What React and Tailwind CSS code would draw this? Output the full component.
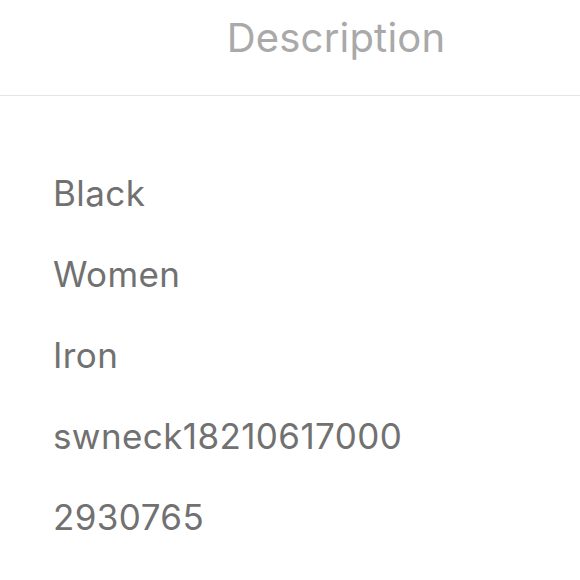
import React from 'react';

const rows = ["Black", "Women", "Iron", "swneck18210617000", "2930765"];

const App = () => {
  return (
    <div className="w-[580px] h-[580px] bg-white overflow-hidden" style={{ fontFamily: 'Inter, "Noto Sans", sans-serif' }}>
      <div className="h-[96px] border-b border-[#e6e6e6] flex justify-center pt-[12px]">
        <h1 className="text-[40px] leading-[52px] text-[#a9a9a9] font-normal pl-[92px] tracking-[0.2px]">Description</h1>
      </div>
      <div className="pl-[53px] pt-[72px] flex flex-col">
        {rows.map((r) => (
          <div key={r} className="h-[81px] text-[35px] leading-[50px] tracking-[0.4px] text-[#717171]">{r}</div>
        ))}
      </div>
    </div>
  );
};

export default App;
